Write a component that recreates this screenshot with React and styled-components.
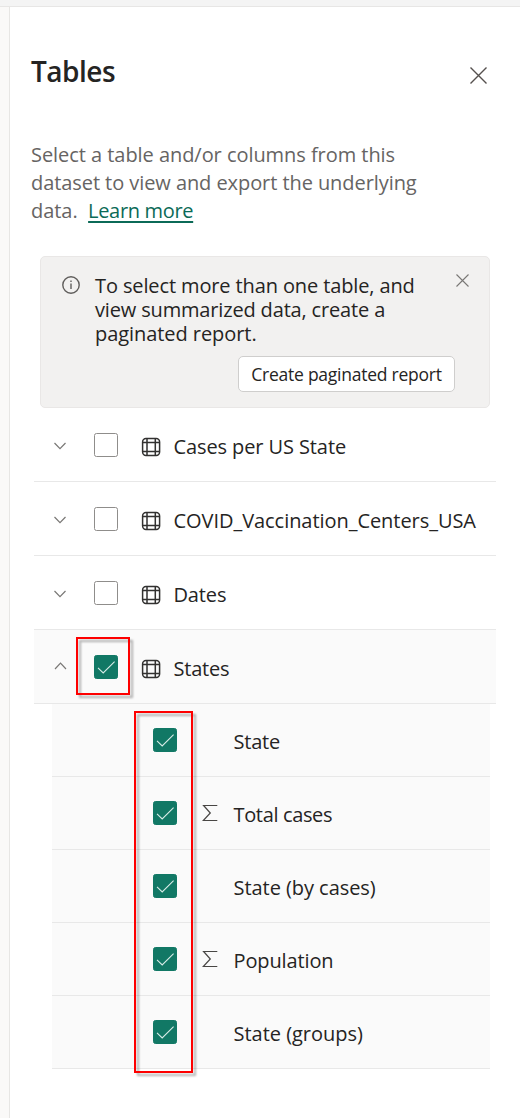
import React from "react";
import styled, { createGlobalStyle } from "styled-components";

const Global = createGlobalStyle`
  * { box-sizing: border-box; }
  body { margin: 0; background: #fff; font-family: "Segoe UI", "Open Sans", "Noto Sans", sans-serif; color: #252423; }
`;

const Page = styled.div`
  width: 520px;
  height: 1118px;
  display: grid;
  grid-template: 7px 1fr / 10px 1fr;
  overflow: hidden;
`;
const TopBar = styled.div`
  grid-column: 1 / -1;
  background: #f4f4f4;
  border-bottom: 1px solid #e7e6e5;
`;
const Gutter = styled.div`
  background: #faf9f8;
  border-right: 1px solid #e7e6e4;
`;
const Panel = styled.aside`
  display: flex;
  flex-direction: column;
`;
const Header = styled.header`
  display: flex;
  justify-content: space-between;
  padding: 44px 33px 0 21px;
  height: 134px;
`;
const Title = styled.h1`
  margin: 0;
  font-size: 28px;
  line-height: 40px;
  font-weight: 600;
  letter-spacing: -0.5px;
`;
const IconButton = styled.button`
  display: flex;
  border: 0;
  padding: 0;
  background: none;
  width: ${(p) => p.$size}px;
  height: ${(p) => p.$size}px;
  margin-top: ${(p) => p.$top}px;
`;
const Line = styled.span`
  display: block;
  white-space: nowrap;
  letter-spacing: ${(p) => p.$ls || 0}px;
`;
const Description = styled.p`
  margin: 0 0 0 21px;
  height: 108px;
  font-size: 20px;
  line-height: 28px;
  color: #666463;
`;
const Link = styled.a`
  color: #0b6a57;
  margin-left: 10.5px;
  letter-spacing: -0.33px;
  text-decoration: underline;
  text-decoration-thickness: 2px;
  text-underline-offset: 3px;
  text-decoration-skip-ink: none;
`;
const Notice = styled.section`
  width: 450px;
  height: 152px;
  margin: 7px 0 0 30px;
  padding: 17px 19px 0 21px;
  display: grid;
  grid-template-columns: 33px 1fr 14px;
  grid-template-rows: 82px 36px;
  background: #f2f1f0;
  border: 1px solid #e9e7e6;
  border-radius: 5px;
`;
const NoticeText = styled.div`
  font-size: 20px;
  line-height: 24px;
`;
const ReportButton = styled.button`
  grid-column: 1 / -1;
  justify-self: end;
  width: 217px;
  height: 36px;
  margin-right: 15px;
  padding: 1px 0 0;
  background: #fff;
  border: 1px solid #cfcecd;
  border-radius: 5px;
  color: #252423;
  font: 17.5px/33px "Segoe UI", "Open Sans", "Noto Sans", sans-serif;
  letter-spacing: -0.24px;
  white-space: nowrap;
`;
const TableRow = styled.div`
  position: relative;
  display: grid;
  grid-template-columns: 41px 47px 32.5px 1fr;
  align-items: center;
  width: 462px;
  height: 74px;
  margin-left: 24px;
  padding-left: 19px;
  border-bottom: 1px solid #e8e8e8;
  background: ${(p) => (p.$open ? "#fafafa" : "#fff")};
`;
const ColumnList = styled.div`
  position: relative;
  width: 438px;
  margin-left: 42px;
`;
const ColumnRow = styled.div`
  display: grid;
  grid-template-columns: 48.5px 32px 1fr;
  align-items: center;
  height: 73px;
  padding-left: 101px;
  border-bottom: 1px solid #e8e8e8;
  background: #fafafa;
`;
const Label = styled.span`
  font-size: 20px;
  line-height: 28px;
  margin-top: ${(p) => p.$drop || 3}px;
  white-space: nowrap;
  letter-spacing: ${(p) => p.$ls || 0}px;
`;
const Box = styled.span`
  display: flex;
  width: 24px;
  height: 24px;
  margin-bottom: ${(p) => (p.$child ? 0 : -1)}px;
  border: 1px solid ${(p) => (p.$on ? "#117865" : "#8f8d8b")};
  border-radius: 2.5px;
  background: ${(p) => (p.$on ? "#117865" : "#fff")};
`;
const Highlight = styled.div`
  position: absolute;
  left: ${(p) => p.$x}px;
  top: ${(p) => p.$y}px;
  width: ${(p) => p.$w}px;
  height: ${(p) => p.$h}px;
  border: 2px solid #fe0000;
  filter: drop-shadow(3px 3px 1px rgba(0, 0, 0, 0.3));
  z-index: 1;
`;

const InfoSvg = styled.svg`
  margin-top: 2px;
`;
const ChevronSvg = styled.svg`
  margin-top: ${(p) => (p.$up ? -1 : 3)}px;
`;
const TableSvg = styled.svg`
  margin-top: 4px;
`;
const SigmaSlot = styled.span`
  display: flex;
`;

const Cross = ({ size, color, weight }) => (
  <svg width={size} height={size} viewBox={`0 0 ${size} ${size}`} fill="none" stroke={color} strokeWidth={weight}>
    <path d={`M.5 .5 L${size - 0.5} ${size - 0.5} M${size - 0.5} .5 L.5 ${size - 0.5}`} />
  </svg>
);
const Info = () => (
  <InfoSvg width="18" height="18" viewBox="0 0 18 18" fill="none" stroke="#605e5c" strokeWidth="1.4">
    <circle cx="9" cy="9" r="8.2" />
    <path d="M9 7.5V13" />
    <path d="M9 4.4V6" />
  </InfoSvg>
);
const Chevron = ({ up }) => (
  <ChevronSvg $up={up} width="14" height="8" viewBox="0 0 14 8" fill="none" stroke="#797775" strokeWidth="1.2">
    <path d={up ? "M2 7 L7.5 1.2 L13 7" : "M1.5 1 L7 6.7 L12.5 1"} />
  </ChevronSvg>
);
const TableIcon = () => (
  <TableSvg width="20" height="20" viewBox="0 0 20 20" fill="none" stroke="#323130" strokeWidth="1.5">
    <rect x="1.6" y="1.6" width="17" height="16.8" rx="3.4" />
    <path d="M1.6 5.5H18.6M1.6 14.5H18.6M6 1.6V18.4M14.3 1.6V18.4" />
  </TableSvg>
);
const Sigma = () => (
  <svg width="16" height="18" viewBox="0 0 16 18" fill="none" stroke="#484644" strokeWidth="1.2">
    <path d="M15.3 1.5H1.6L8.3 9L1.3 16.5H15.3" />
  </svg>
);
const Check = () => (
  <svg width="22" height="22" viewBox="0 0 22 22" fill="none" stroke="#d8ece7" strokeWidth="1.1">
    <path d="M3 11.8L8.2 17L19.6 5.6" />
  </svg>
);

const tables = [
  { name: "Cases per US State", ls: -0.1 },
  { name: "COVID_Vaccination_Centers_USA", ls: -0.05 },
  { name: "Dates", ls: -0.15 },
  { name: "States", ls: -0.2, open: true },
];
const columns = [
  { name: "State", ls: -0.2 },
  { name: "Total cases", ls: -0.35, sum: true },
  { name: "State (by cases)", ls: -0.05 },
  { name: "Population", ls: -0.12, sum: true },
  { name: "State (groups)", ls: -0.02 },
];

export default function App() {
  return (
    <Page>
      <Global />
      <TopBar />
      <Gutter />
      <Panel>
        <Header>
          <Title>Tables</Title>
          <IconButton $size={17} $top={16} aria-label="Close">
            <Cross size={17} color="#55504e" weight={1.4} />
          </IconButton>
        </Header>
        <Description>
          <Line $ls={-0.05}>Select a table and/or columns from this</Line>
          <Line $ls={-0.07}>dataset to view and export the underlying</Line>
          <Line $ls={-0.05}>data.<Link>Learn more</Link></Line>
        </Description>
        <Notice>
          <Info />
          <NoticeText>
            <Line $ls={-0.12}>To select more than one table, and</Line>
            <Line $ls={-0.16}>view summarized data, create a</Line>
            <Line $ls={-0.06}>paginated report.</Line>
          </NoticeText>
          <IconButton $size={13} $top={0} aria-label="Dismiss">
            <Cross size={13} color="#797775" weight={1.1} />
          </IconButton>
          <ReportButton>Create paginated report</ReportButton>
        </Notice>
        {tables.map((t) => (
          <TableRow key={t.name} $open={t.open}>
            <Chevron up={t.open} />
            <Box $on={t.open}>{t.open && <Check />}</Box>
            <TableIcon />
            <Label $ls={t.ls} $drop={5}>{t.name}</Label>
            {t.open && <Highlight $x={42} $y={7} $w={54} $h={58} />}
          </TableRow>
        ))}
        <ColumnList>
          {columns.map((c) => (
            <ColumnRow key={c.name}>
              <Box $on $child><Check /></Box>
              <SigmaSlot>{c.sum && <Sigma />}</SigmaSlot>
              <Label $ls={c.ls}>{c.name}</Label>
            </ColumnRow>
          ))}
          <Highlight $x={82} $y={7} $w={59} $h={362} />
        </ColumnList>
      </Panel>
    </Page>
  );
}
